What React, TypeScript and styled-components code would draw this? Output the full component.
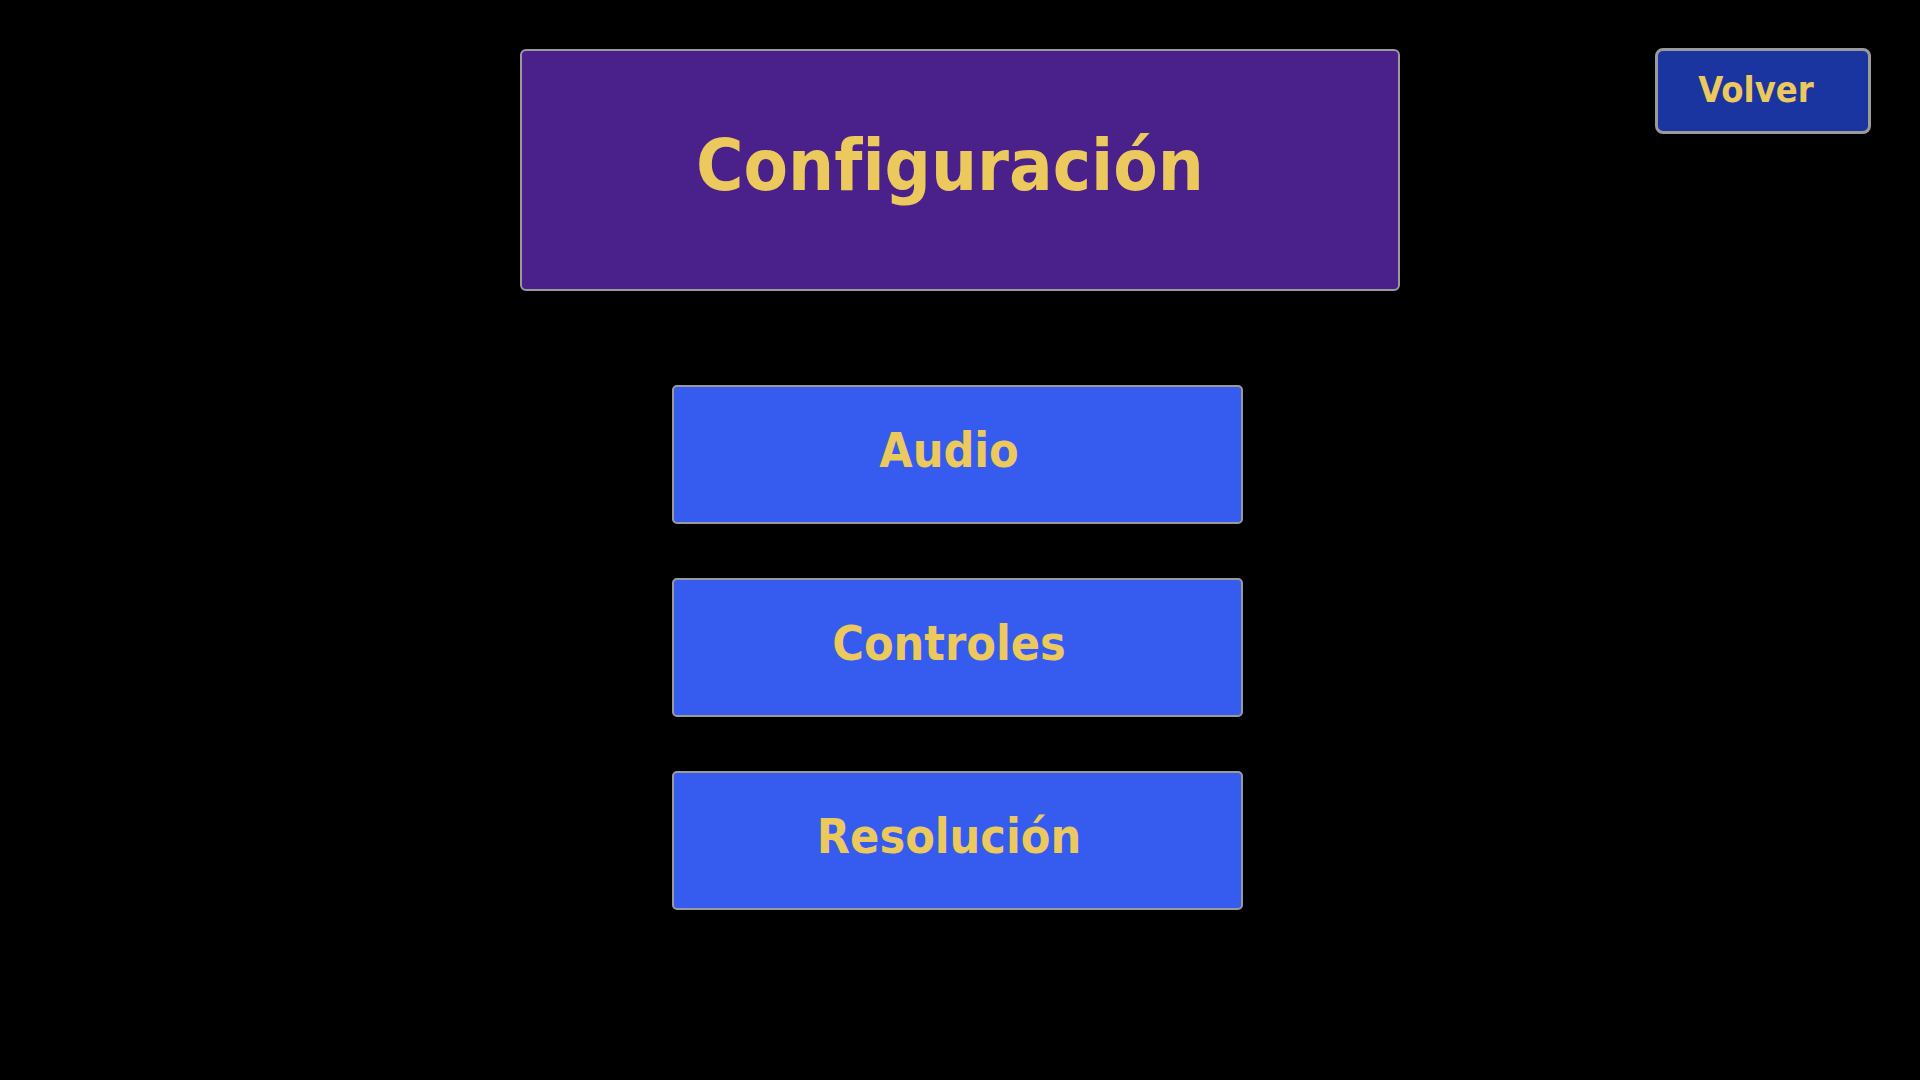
import styled, { createGlobalStyle } from "styled-components";

const GlobalStyle = createGlobalStyle`
  html, body {
    margin: 0;
    padding: 0;
    background: #000;
  }
  * {
    box-sizing: border-box;
  }
`;

const Page = styled.div`
  width: 100vw;
  min-height: 100vh;
  background: #000;
  padding-top: 49px;
  font-family: "DejaVu Sans Condensed", "DejaVu Sans", Verdana, sans-serif;
  font-weight: bold;
  font-variant-ligatures: none;
  color: #ebc95d;
`;

const Header = styled.header`
  display: grid;
  grid-template-columns: 1fr 880px 1fr;
  align-items: start;
`;

const TitleBox = styled.div`
  grid-column: 2;
  height: 242px;
  padding: 0 20px 10px 0;
  background: #4a208a;
  border: 2px solid #9a9a9a;
  border-radius: 6px;
  display: flex;
  align-items: center;
  justify-content: center;
`;

const Title = styled.h1`
  margin: 0;
  font-size: 72px;
  font-weight: bold;
  line-height: 1;
`;

const BackButton = styled.button`
  grid-column: 3;
  justify-self: end;
  margin: -1px 49px 0 0;
  width: 216px;
  height: 86px;
  padding: 0 14px 4px 0;
  background: #1a34a0;
  border: 3px solid #9a9a9a;
  border-radius: 8px;
  color: inherit;
  font-family: inherit;
  font-weight: bold;
  font-variant-ligatures: none;
  font-size: 36px;
  cursor: pointer;
`;

const Menu = styled.nav`
  display: flex;
  flex-direction: column;
  align-items: center;
  gap: 54px;
  margin-top: 94px;
  padding-right: 6px;
`;

const MenuButton = styled.button`
  width: 571px;
  height: 139px;
  padding: 0 16px 10px 0;
  background: #355cef;
  border: 2px solid #9a9a9a;
  border-radius: 5px;
  color: inherit;
  font-family: inherit;
  font-weight: bold;
  font-variant-ligatures: none;
  font-size: 48px;
  cursor: pointer;
`;

const items = ["Audio", "Controles", "Resolución"];

export default function App() {
  return (
    <>
      <GlobalStyle />
      <Page>
        <Header>
          <TitleBox>
            <Title>Configuración</Title>
          </TitleBox>
          <BackButton>Volver</BackButton>
        </Header>
        <Menu>
          {items.map((label) => (
            <MenuButton key={label}>{label}</MenuButton>
          ))}
        </Menu>
      </Page>
    </>
  );
}
